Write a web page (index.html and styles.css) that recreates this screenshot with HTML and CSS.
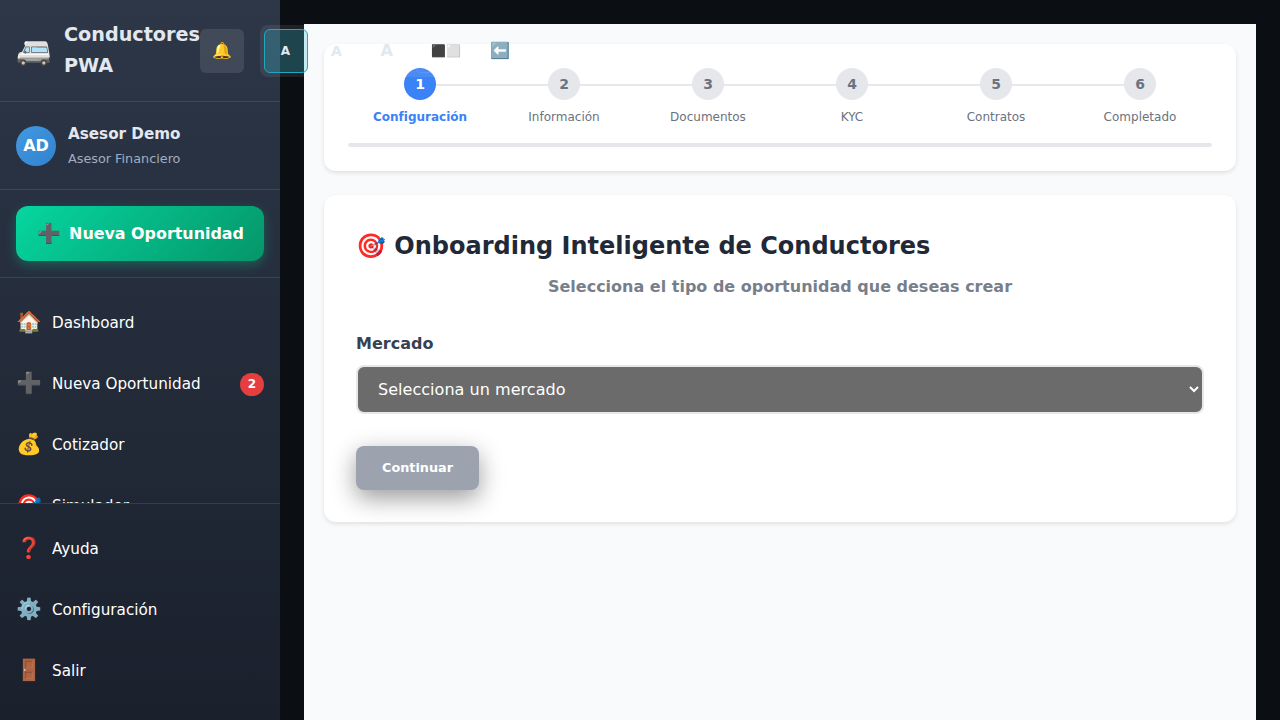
FILE: index.html
```html
<!DOCTYPE html>
<html lang="es">
<head>
<meta charset="utf-8">
<title>Conductores PWA</title>
<link rel="stylesheet" href="styles.css">
</head>
<body>
<div class="app">
  <aside class="sidebar">
    <header class="brand">
      <div class="logo"><span class="logo-icon">🚐</span><span class="logo-text">Conductores PWA</span></div>
      <div class="actions">
        <button class="bell">🔔</button>
        <div class="tools">
          <button class="tool small active">A</button>
          <button class="tool medium">A</button>
          <button class="tool large">A</button>
          <button class="tool contrast">⬛⬜</button>
          <button class="tool back">⬅️</button>
        </div>
      </div>
    </header>
    <section class="user">
      <div class="avatar">AD</div>
      <div><div class="user-name">Asesor Demo</div><div class="user-role">Asesor Financiero</div></div>
    </section>
    <section class="create"><button class="create-btn"><span class="create-icon">➕</span><span>Nueva Oportunidad</span></button></section>
    <nav class="menu">
      <a class="item"><span class="icon">🏠</span><span>Dashboard</span></a>
      <a class="item"><span class="icon">➕</span><span>Nueva Oportunidad</span><span class="badge">2</span></a>
      <a class="item"><span class="icon">💰</span><span>Cotizador</span></a>
      <a class="item"><span class="icon">🎯</span><span>Simulador</span></a>
    </nav>
    <nav class="footer-menu">
      <a class="item"><span class="icon">❓</span><span>Ayuda</span></a>
      <a class="item"><span class="icon">⚙️</span><span>Configuración</span></a>
      <a class="item"><span class="icon">🚪</span><span>Salir</span></a>
    </nav>
  </aside>
  <main class="main">
    <div class="page">
      <section class="card progress">
        <ol class="steps">
          <li class="step current"><span class="dot">1</span><span class="label">Configuración</span></li>
          <li class="step"><span class="dot">2</span><span class="label">Información</span></li>
          <li class="step"><span class="dot">3</span><span class="label">Documentos</span></li>
          <li class="step"><span class="dot">4</span><span class="label">KYC</span></li>
          <li class="step"><span class="dot">5</span><span class="label">Contratos</span></li>
          <li class="step"><span class="dot">6</span><span class="label">Completado</span></li>
        </ol>
        <div class="track"></div>
      </section>
      <section class="card form">
        <h2 class="title">🎯 Onboarding Inteligente de Conductores</h2>
        <p class="subtitle">Selecciona el tipo de oportunidad que deseas crear</p>
        <label class="field-label" for="market">Mercado</label>
        <select class="select" id="market"><option>Selecciona un mercado</option></select>
        <button class="continue">Continuar</button>
      </section>
    </div>
  </main>
</div>
</body>
</html>
```
FILE: styles.css
```css
* { box-sizing: border-box; }
body {
  margin: 0;
  background: #0b0f14;
  font-family: "DejaVu Sans", sans-serif;
  overflow: hidden;
}
button { font-family: inherit; border: 0; margin: 0; }
.app { display: flex; height: 720px; }

.sidebar {
  position: relative;
  z-index: 2;
  display: flex;
  flex-direction: column;
  flex: none;
  width: 280px;
  height: 720px;
  color: #fff;
  background: linear-gradient(180deg, #2d3748 0%, #1a202c 100%);
}
.brand {
  display: flex;
  align-items: center;
  height: 102px;
  padding: 0 16px;
  border-bottom: 1px solid rgba(255,255,255,.1);
}
.logo { display: flex; align-items: center; gap: 12px; flex: none; width: 184px; }
.logo-icon { width: 36px; font-size: 28.8px; line-height: 45px; }
.logo-text { padding-bottom: 2px; font-size: 19.2px; line-height: 31px; font-weight: 700; color: #e2e8f0; }
.actions { display: flex; align-items: center; gap: 16px; }
.bell {
  width: 44px; height: 44px; padding: 0;
  border-radius: 6px;
  background: rgba(255,255,255,.1);
  font-size: 16px;
}
.tools {
  display: flex;
  gap: 6.4px;
  flex: none;
  padding: 4px;
  border-radius: 8px;
  background: rgba(255,255,255,.08);
}
.tool {
  flex: none;
  min-width: 44px; height: 44px; padding: 0 8px;
  border: 1px solid rgba(255,255,255,.1);
  border-radius: 6px;
  background: transparent;
  color: #e2e8f0;
  font-weight: 700;
}
.tool.active { background: rgba(34,184,207,.24); border-color: #22a7c0; }
.small { font-size: 12px; padding-right: 9px; }
.medium { font-size: 14px; }
.large { font-size: 16px; }
.contrast { width: 62px; font-size: 12px; }
.back { min-width: 32px; width: 32px; padding: 0; font-size: 16px; }

.user {
  display: flex;
  align-items: center;
  gap: 12px;
  height: 88px;
  padding: 0 16px;
  border-bottom: 1px solid rgba(255,255,255,.1);
}
.avatar {
  width: 40px; height: 40px;
  border-radius: 50%;
  background: linear-gradient(135deg, #4299e1, #3182ce);
  font-size: 16px; line-height: 40px; font-weight: 700; text-align: center;
}
.user-name { padding-top: 1px; font-size: 15.2px; line-height: 25px; font-weight: 700; color: #e2e8f0; }
.user-role { font-size: 12.8px; line-height: 24px; color: #a0aec0; }
.create { height: 88px; padding: 16px; border-bottom: 1px solid rgba(255,255,255,.1); }
.create-btn {
  display: flex;
  align-items: center;
  justify-content: center;
  gap: 8px;
  width: 248px; height: 55px; padding: 0 0 0 1px;
  border-radius: 12px;
  background: linear-gradient(135deg, #06d6a0, #059669);
  box-shadow: 0 4px 12px rgba(6,214,160,.3);
  color: #fff;
  font-size: 15.9px; font-weight: 700;
}
.create-icon { font-size: 19.2px; font-weight: 400; }
.menu { flex: 1; min-height: 0; overflow: hidden; padding-top: 14px; }
.footer-menu { height: 217px; padding-top: 14px; border-top: 1px solid rgba(255,255,255,.1); }
.item { display: flex; align-items: center; gap: 12px; height: 61px; padding: 0 16px; font-size: 15.2px; }
.icon { display: flex; justify-content: center; width: 24px; padding: 0 0 1px 1px; font-size: 20.8px; line-height: 26px; }
.badge {
  margin: 2px 0 0 auto;
  width: 24px; height: 23px;
  border-radius: 12px;
  background: #e53e3e;
  font-size: 12px; line-height: 23px; font-weight: 700; text-align: center;
}

.main { flex: 1; padding: 24px 24px 0; }
.page {
  display: flex;
  flex-direction: column;
  gap: 24px;
  height: 696px;
  padding: 20px;
  background: #f9fafb;
}
.card { background: #fff; border-radius: 12px; box-shadow: 0 2px 4px rgba(0,0,0,.1); }
.progress { height: 127px; padding: 24px; }
.steps { display: flex; list-style: none; margin: 0 0 17px; padding: 0; }
.step {
  flex: 1;
  display: flex;
  flex-direction: column;
  align-items: center;
  gap: 8px;
  height: 58px;
  background: linear-gradient(#e5e7eb, #e5e7eb) 0 16px / 100% 2px no-repeat;
}
.step:first-child { background-position: 72px 16px; }
.step:last-child { background-size: 72px 2px; }
.dot {
  width: 32px; height: 32px;
  border-radius: 50%;
  background: #e5e7eb;
  color: #6b7280;
  font-size: 14px; line-height: 32px; font-weight: 700; text-align: center;
}
.label { font-size: 12px; line-height: 18px; color: #6b7280; }
.current .dot { background: #3b82f6; color: #fff; }
.current .label { color: #3b82f6; font-weight: 700; }
.track { height: 4px; border-radius: 2px; background: #e5e7eb; }

.form { height: 327px; padding: 32px; }
.title { margin: 0; font-size: 24px; line-height: 38px; color: #1f2937; }
.subtitle { margin: 9px 0 31px; font-size: 16px; line-height: 26px; font-weight: 700; text-align: center; color: #787f8b; }
.field-label { display: block; margin-bottom: 8px; font-size: 16px; line-height: 26px; font-weight: 700; color: #374151; }
.select {
  display: block;
  width: 848px; height: 49px;
  padding: 0 16px;
  border: 2px solid #e5e7eb;
  border-radius: 8px;
  background-color: #6b6b6b;
  color: #fff;
  font: 16px "DejaVu Sans", sans-serif;
  letter-spacing: .04px;
}
.continue {
  display: block;
  width: 123px; height: 44px;
  margin-top: 32px;
  padding: 0 0 2px;
  border-radius: 8px;
  background: #9ca3af;
  box-shadow: 0 8px 24px rgba(0,0,0,.4);
  color: #fff;
  font-size: 12.8px; font-weight: 700;
}
```
